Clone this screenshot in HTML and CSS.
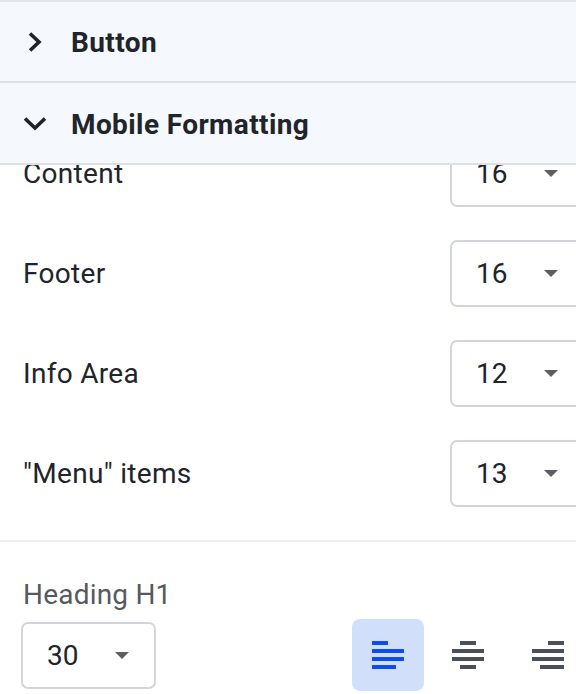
FILE: index.html
```html
<!DOCTYPE html>
<html lang="en">
<head>
<meta charset="utf-8">
<link rel="stylesheet" href="styles.css">
</head>
<body>
<div class="panel">
  <div class="acc-head first">
    <svg class="chev-right" width="16" height="22" viewBox="0 0 16 22"><path d="M3 2.5 L12 11 L3 19.5" fill="none" stroke="#1f2329" stroke-width="3.6"/></svg>
    <span class="acc-title">Button</span>
  </div>
  <div class="acc-head">
    <svg class="chev-down" width="24" height="16" viewBox="0 0 24 16"><path d="M2 2.5 L12 12 L22 2.5" fill="none" stroke="#1f2329" stroke-width="3.6"/></svg>
    <span class="acc-title">Mobile Formatting</span>
  </div>
  <div class="scroll">
    <div class="rows">
      <div class="row"><span class="label">Content</span><div class="select"><span class="val">16</span><span class="caret"></span></div></div>
      <div class="row"><span class="label">Footer</span><div class="select"><span class="val">16</span><span class="caret"></span></div></div>
      <div class="row"><span class="label">Info Area</span><div class="select"><span class="val">12</span><span class="caret"></span></div></div>
      <div class="row"><span class="label">"Menu" items</span><div class="select"><span class="val">13</span><span class="caret"></span></div></div>
    </div>
    <div class="divider"></div>
    <div class="heading-block">
      <div class="sub-label">Heading H1</div>
      <div class="h-row">
        <div class="select small"><span class="val">30</span><span class="caret"></span></div>
        <div class="aligns">
          <div class="abtn active">
            <svg width="32" height="28" viewBox="0 0 32 28"><rect x="0" y="0" width="16" height="4"/><rect x="0" y="8" width="32" height="4"/><rect x="0" y="16" width="32" height="4"/><rect x="0" y="24" width="24" height="4"/></svg>
          </div>
          <div class="abtn">
            <svg width="32" height="28" viewBox="0 0 32 28"><rect x="8" y="0" width="16" height="4"/><rect x="0" y="8" width="32" height="4"/><rect x="0" y="16" width="32" height="4"/><rect x="8" y="24" width="16" height="4"/></svg>
          </div>
          <div class="abtn">
            <svg width="32" height="28" viewBox="0 0 32 28"><rect x="16" y="0" width="16" height="4"/><rect x="0" y="8" width="32" height="4"/><rect x="0" y="16" width="32" height="4"/><rect x="8" y="24" width="24" height="4"/></svg>
          </div>
        </div>
      </div>
    </div>
  </div>
</div>
</body>
</html>
```
FILE: styles.css
```css
html, body {
  margin: 0;
  padding: 0;
  background: #ffffff;
  overflow: hidden;
}
body {
  font-family: Roboto, "Liberation Sans", sans-serif;
  color: #21252b;
  width: 576px;
  height: 694px;
}
.panel {
  width: 576px;
  height: 694px;
  overflow: hidden;
  border-top: 2px solid #e1e4e8;
  box-sizing: border-box;
}
.acc-head {
  height: 79px;
  background: #f5f8fd;
  border-bottom: 2px solid #dde0e5;
  display: flex;
  align-items: center;
  padding-left: 23px;
  position: relative;
  z-index: 2;
}
.acc-head + .acc-head {
  height: 80px;
}
.chev-right {
  margin-left: 4px;
  margin-right: 28px;
}
.chev-down {
  margin-right: 24px;
  margin-top: 2px;
}
.acc-title {
  font-weight: 700;
  font-size: 28px;
  letter-spacing: 0.4px;
  margin-top: 2px;
}
.scroll {
  overflow: hidden;
}
.rows {
  margin-top: -25px;
  padding-left: 23px;
  display: flex;
  flex-direction: column;
  gap: 33px;
}
.row {
  display: flex;
  align-items: center;
  justify-content: space-between;
  height: 67px;
  margin-right: -14px;
}
.label {
  font-size: 28px;
  letter-spacing: 0.3px;
}
.select {
  width: 140px;
  height: 67px;
  flex-shrink: 0;
  box-sizing: border-box;
  border: 2px solid #d2d5db;
  border-radius: 7px;
  display: flex;
  align-items: center;
  padding-left: 24px;
  background: #fff;
}
.val {
  font-size: 28px;
  width: 68px;
}
.caret {
  width: 0;
  height: 0;
  border-left: 7px solid transparent;
  border-right: 7px solid transparent;
  border-top: 7px solid #5c5e63;
}
.divider {
  height: 2px;
  background: #eef0f2;
  margin-top: 33px;
}
.heading-block {
  padding-left: 21px;
  padding-top: 33px;
}
.sub-label {
  font-size: 28px;
  letter-spacing: 0.2px;
  color: #56595e;
  padding-left: 2px;
  line-height: 40px;
}
.h-row {
  display: flex;
  align-items: center;
  margin-top: 4px;
}
.select.small {
  width: 135px;
  height: 67px;
}
.select.small .val {
  width: 68px;
}
.aligns {
  display: flex;
  gap: 8px;
  margin-left: 196px;
  flex-shrink: 0;
}
.abtn {
  width: 72px;
  height: 72px;
  border-radius: 8px;
  display: flex;
  align-items: center;
  justify-content: center;
  flex-shrink: 0;
}
.abtn svg {
  fill: #4b4f5c;
}
.abtn.active {
  background: #d2dffb;
}
.abtn.active svg {
  fill: #0c4cf2;
}
```
